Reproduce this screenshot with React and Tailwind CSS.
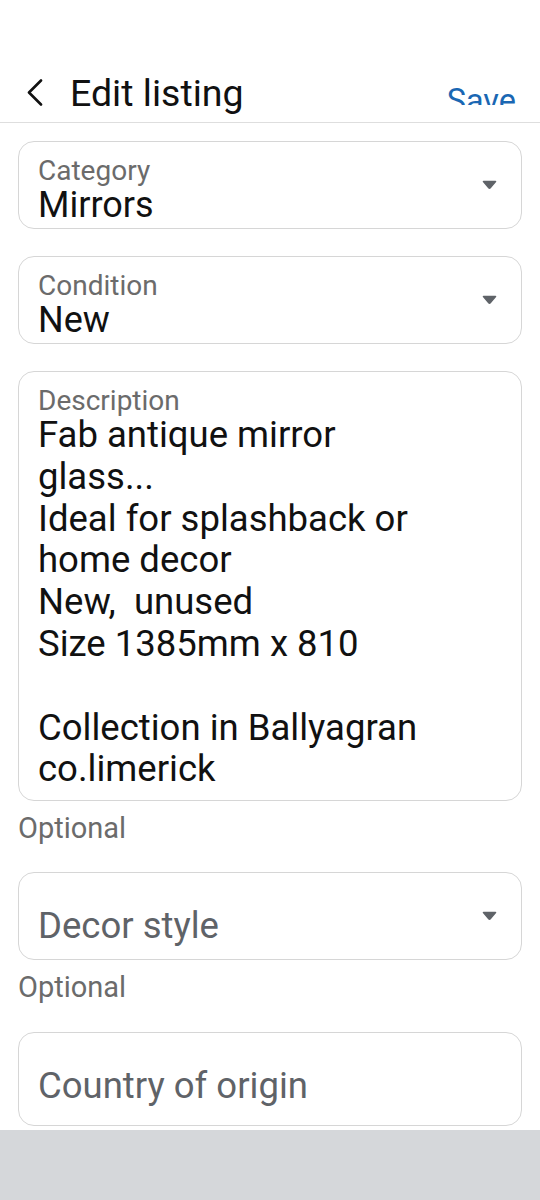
import React from "react";

const Caret = () => (
  <svg width="15" height="10" viewBox="0 0 15 10" className="shrink-0">
    <path
      d="M1.5 1.5 H13.5 L8.2 7.8 Q7.5 8.6 6.8 7.8 Z"
      fill="#5f6368"
      stroke="#5f6368"
      strokeWidth="1.6"
      strokeLinejoin="round"
    />
  </svg>
);

const SelectField = ({ label, value }) => (
  <div className="h-[88px] shrink-0 border border-[#d6d6d6] rounded-[16px] flex items-center pl-[19px] pr-[24px]">
    <div className="flex-1 self-start pt-[13px]">
      <div className="text-[28px] leading-[31px] text-[#6b6b6b]">{label}</div>
      <div className="text-[36px] leading-[38px] text-[#111]">{value}</div>
    </div>
    <Caret />
  </div>
);

const description = `Fab antique mirror
glass...
Ideal for splashback or
home decor
New,  unused
Size 1385mm x 810

Collection in Ballyagran
co.limerick`;

export default function App() {
  return (
    <div className="w-[540px] h-[1200px] bg-white flex flex-col overflow-hidden font-['Roboto',_'Noto_Sans',_sans-serif]">
      {/* Header */}
      <header className="h-[123px] shrink-0 border-b border-[#dedede] flex items-start pt-[71px] pl-[27px] pr-[24px]">
        <svg width="16" height="27" viewBox="0 0 16 27" className="mt-[8px] shrink-0">
          <polyline
            points="14,1.5 2,13.5 14,25.5"
            fill="none"
            stroke="#111"
            strokeWidth="2.6"
            strokeLinecap="round"
            strokeLinejoin="round"
          />
        </svg>
        <h1 className="ml-[27px] text-[37.5px] leading-[44px] text-[#111]">Edit listing</h1>
        <div className="ml-auto mt-[11px] h-[23px] overflow-hidden">
          <span className="block text-[32.4px] leading-[38px] text-[#1a67b3]">Save</span>
        </div>
      </header>

      {/* Form */}
      <main className="flex-1 overflow-hidden px-[18px] pt-[18px] flex flex-col">
        <SelectField label="Category" value="Mirrors" />
        <div className="h-[27px] shrink-0" />
        <SelectField label="Condition" value="New" />
        <div className="h-[27px] shrink-0" />

        <div className="shrink-0 border border-[#d6d6d6] rounded-[16px] pl-[19px] pr-[20px] pt-[15px] pb-[10px]">
          <div className="text-[28px] leading-[27px] text-[#6b6b6b]">Description</div>
          <div className="text-[36.5px] leading-[41.8px] text-[#111] whitespace-pre-wrap">{description}</div>
        </div>
        <div className="shrink-0 text-[29px] leading-[32px] text-[#6b6b6b] pt-[11px]">Optional</div>

        <div className="shrink-0 mt-[28px] h-[88px] border border-[#d6d6d6] rounded-[16px] flex items-center pl-[19px] pr-[24px]">
          <div className="flex-1 self-start pt-[33px] text-[36.5px] leading-[40px] text-[#5f6368]">Decor style</div>
          <Caret />
        </div>
        <div className="shrink-0 text-[29px] leading-[32px] text-[#6b6b6b] pt-[11px]">Optional</div>

        <div className="shrink-0 mt-[29px] h-[94px] border border-[#d6d6d6] rounded-[16px] pl-[19px] pt-[33px]">
          <div className="text-[36.5px] leading-[40px] text-[#5f6368]">Country of origin</div>
        </div>
      </main>

      {/* Bottom bar */}
      <div className="h-[70px] shrink-0 bg-[#d5d7da]" />
    </div>
  );
}
